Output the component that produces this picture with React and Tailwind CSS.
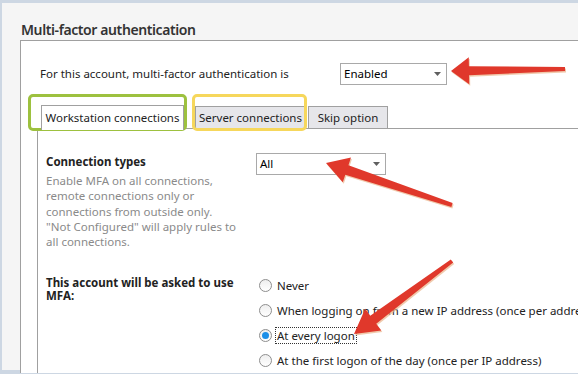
import React from "react";

function arrowPoints(tail, tip, tailW, neckW, headL, headW) {
  const dx = tip[0] - tail[0];
  const dy = tip[1] - tail[1];
  const len = Math.hypot(dx, dy);
  const ux = dx / len, uy = dy / len;
  const px = -uy, py = ux;
  const neck = [tip[0] - ux * headL, tip[1] - uy * headL];
  const pts = [
    [tail[0] + px * tailW / 2, tail[1] + py * tailW / 2],
    [neck[0] + px * neckW / 2, neck[1] + py * neckW / 2],
    [neck[0] + px * headW / 2, neck[1] + py * headW / 2],
    tip,
    [neck[0] - px * headW / 2, neck[1] - py * headW / 2],
    [neck[0] - px * neckW / 2, neck[1] - py * neckW / 2],
    [tail[0] - px * tailW / 2, tail[1] - py * tailW / 2],
  ];
  return pts.map((p) => p.join(",")).join(" ");
}

function Arrow({ tail, tip, tailW = 4, neckW = 9, headL = 18, headW = 26 }) {
  return (
    <>
      <polygon
        points={arrowPoints([tail[0] + 1, tail[1] + 1.5], [tip[0] + 1, tip[1] + 1.5], tailW, neckW, headL, headW)}
        fill="#e9b48a"
        opacity="0.7"
      />
      <polygon points={arrowPoints(tail, tip, tailW, neckW, headL, headW)} fill="#e0382b" />
    </>
  );
}

function Select({ value, className }) {
  return (
    <div className={"shrink-0 flex items-center justify-between border border-[#a9a9a9] bg-white h-[22px] pl-[3px] pr-[5px] " + className}>
      <span className="text-[11.5px] text-black">{value}</span>
      <svg width="7" height="4" viewBox="0 0 7 4">
        <polygon points="0,0 7,0 3.5,4" fill="#606060" />
      </svg>
    </div>
  );
}

function Radio({ checked, label, focus }) {
  return (
    <div className="flex items-center h-[25px]">
      <div className="shrink-0 w-[13px] h-[13px] rounded-full border border-[#8e8e8e] bg-gradient-to-b from-[#eeeeee] to-white flex items-center justify-center">
        {checked && <div className="w-[7px] h-[7px] rounded-full bg-[#1c8fe8]" />}
      </div>
      <span
        className={
          "ml-[4px] text-[11.5px] text-[#222] whitespace-nowrap leading-[15px] px-[1px] " +
          (focus ? "outline outline-1 outline-dotted outline-[#333]" : "")
        }
      >
        {label}
      </span>
    </div>
  );
}

export default function App() {
  return (
    <div
      className="relative w-[578px] h-[374px] overflow-hidden bg-[#cdd7e3] pt-[3px] pl-[2px] pb-[4px]"
      style={{ fontFamily: '"Noto Sans", "Open Sans", sans-serif' }}
    >
      <div className="h-full bg-[#f5f5f5] flex flex-col">
        <div className="h-[39px] pl-[19px] pt-[17px]">
          <h1 className="text-[14px] font-semibold tracking-[-0.4px] text-[#333] leading-[20px]">Multi-factor authentication</h1>
        </div>
        <div className="flex-1 ml-[18px] border-l border-t border-[#a0a0a0] bg-white flex flex-col">
          <div className="flex items-center h-[61px] pt-[5px] pl-[19px]">
            <span className="text-[11.5px] text-[#222] w-[300px] shrink-0 whitespace-nowrap">
              For this account, multi-factor authentication is
            </span>
            <Select value="Enabled" className="w-[107px]" />
          </div>
          <div className="flex items-end pl-[16px]">
            <div className="flex items-end h-[27px] shrink-0">
              <div className="h-[25px] w-[143px] border border-b-0 border-[#a0a0a0] bg-white flex items-center justify-center text-[11.5px] text-[#222] ml-[4px] mb-[-1px] relative z-10">
                Workstation connections
              </div>
              <div className="flex items-end border-b border-[#a0a0a0] h-full">
                <div className="h-[22px] w-[111px] ml-[11px] border border-b-0 border-[#a0a0a0] bg-[#e6e6ea] flex items-center justify-center text-[11.5px] text-[#222]">
                  Server connections
                </div>
                <div className="h-[22px] w-[80px] ml-[2px] border border-b-0 border-[#a0a0a0] bg-[#e6e6ea] flex items-center justify-center text-[11.5px] text-[#222]">
                  Skip option
                </div>
              </div>
            </div>
            <div className="flex-1 border-b border-[#a0a0a0]" />
          </div>
          <div className="flex-1 ml-[16px] border-l border-[#a0a0a0] pl-[8px]">
            <div className="flex pt-[24px]">
              <div className="w-[210px] shrink-0">
                <div className="text-[11.5px] font-bold text-[#222] leading-[16px] mt-[1px]">Connection types</div>
                <div className="text-[11.5px] text-[#8a8a8a] leading-[15.3px] mt-[3px] w-[192px]">
                  Enable MFA on all connections, remote connections only or connections from outside only. "Not Configured" will apply rules to all connections.
                </div>
              </div>
              <Select value="All" className="w-[130px]" />
            </div>
            <div className="flex pt-[24px]">
              <div className="w-[213px] shrink-0 pt-[3px]">
                <div className="text-[11.5px] font-bold text-[#222] leading-[13px] w-[200px]">
                  This account will be asked to use MFA:
                </div>
              </div>
              <div className="flex flex-col">
                <Radio label="Never" />
                <Radio label="When logging on from a new IP address (once per address)" />
                <Radio label="At every logon" checked focus />
                <Radio label="At the first logon of the day (once per IP address)" />
              </div>
            </div>
          </div>
        </div>
      </div>

      <div className="absolute left-[28px] top-[94px] w-[159px] h-[37px] rounded-[5px] border-[3px] border-[#9dc13f] pointer-events-none" />
      <div className="absolute left-[192px] top-[94px] w-[115px] h-[37px] rounded-[5px] border-[3px] border-[#f6d75c] pointer-events-none" />

      <svg className="absolute left-0 top-0 pointer-events-none" width="578" height="374">
        <Arrow tail={[565, 69]} tip={[451, 71]} tailW={4} neckW={9} headL={18} headW={27} />
        <Arrow tail={[452, 205]} tip={[326, 163]} tailW={4} neckW={10} headL={22} headW={26} />
        <Arrow tail={[452, 261]} tip={[354, 334]} tailW={4} neckW={10} headL={24} headW={27} />
      </svg>
    </div>
  );
}
